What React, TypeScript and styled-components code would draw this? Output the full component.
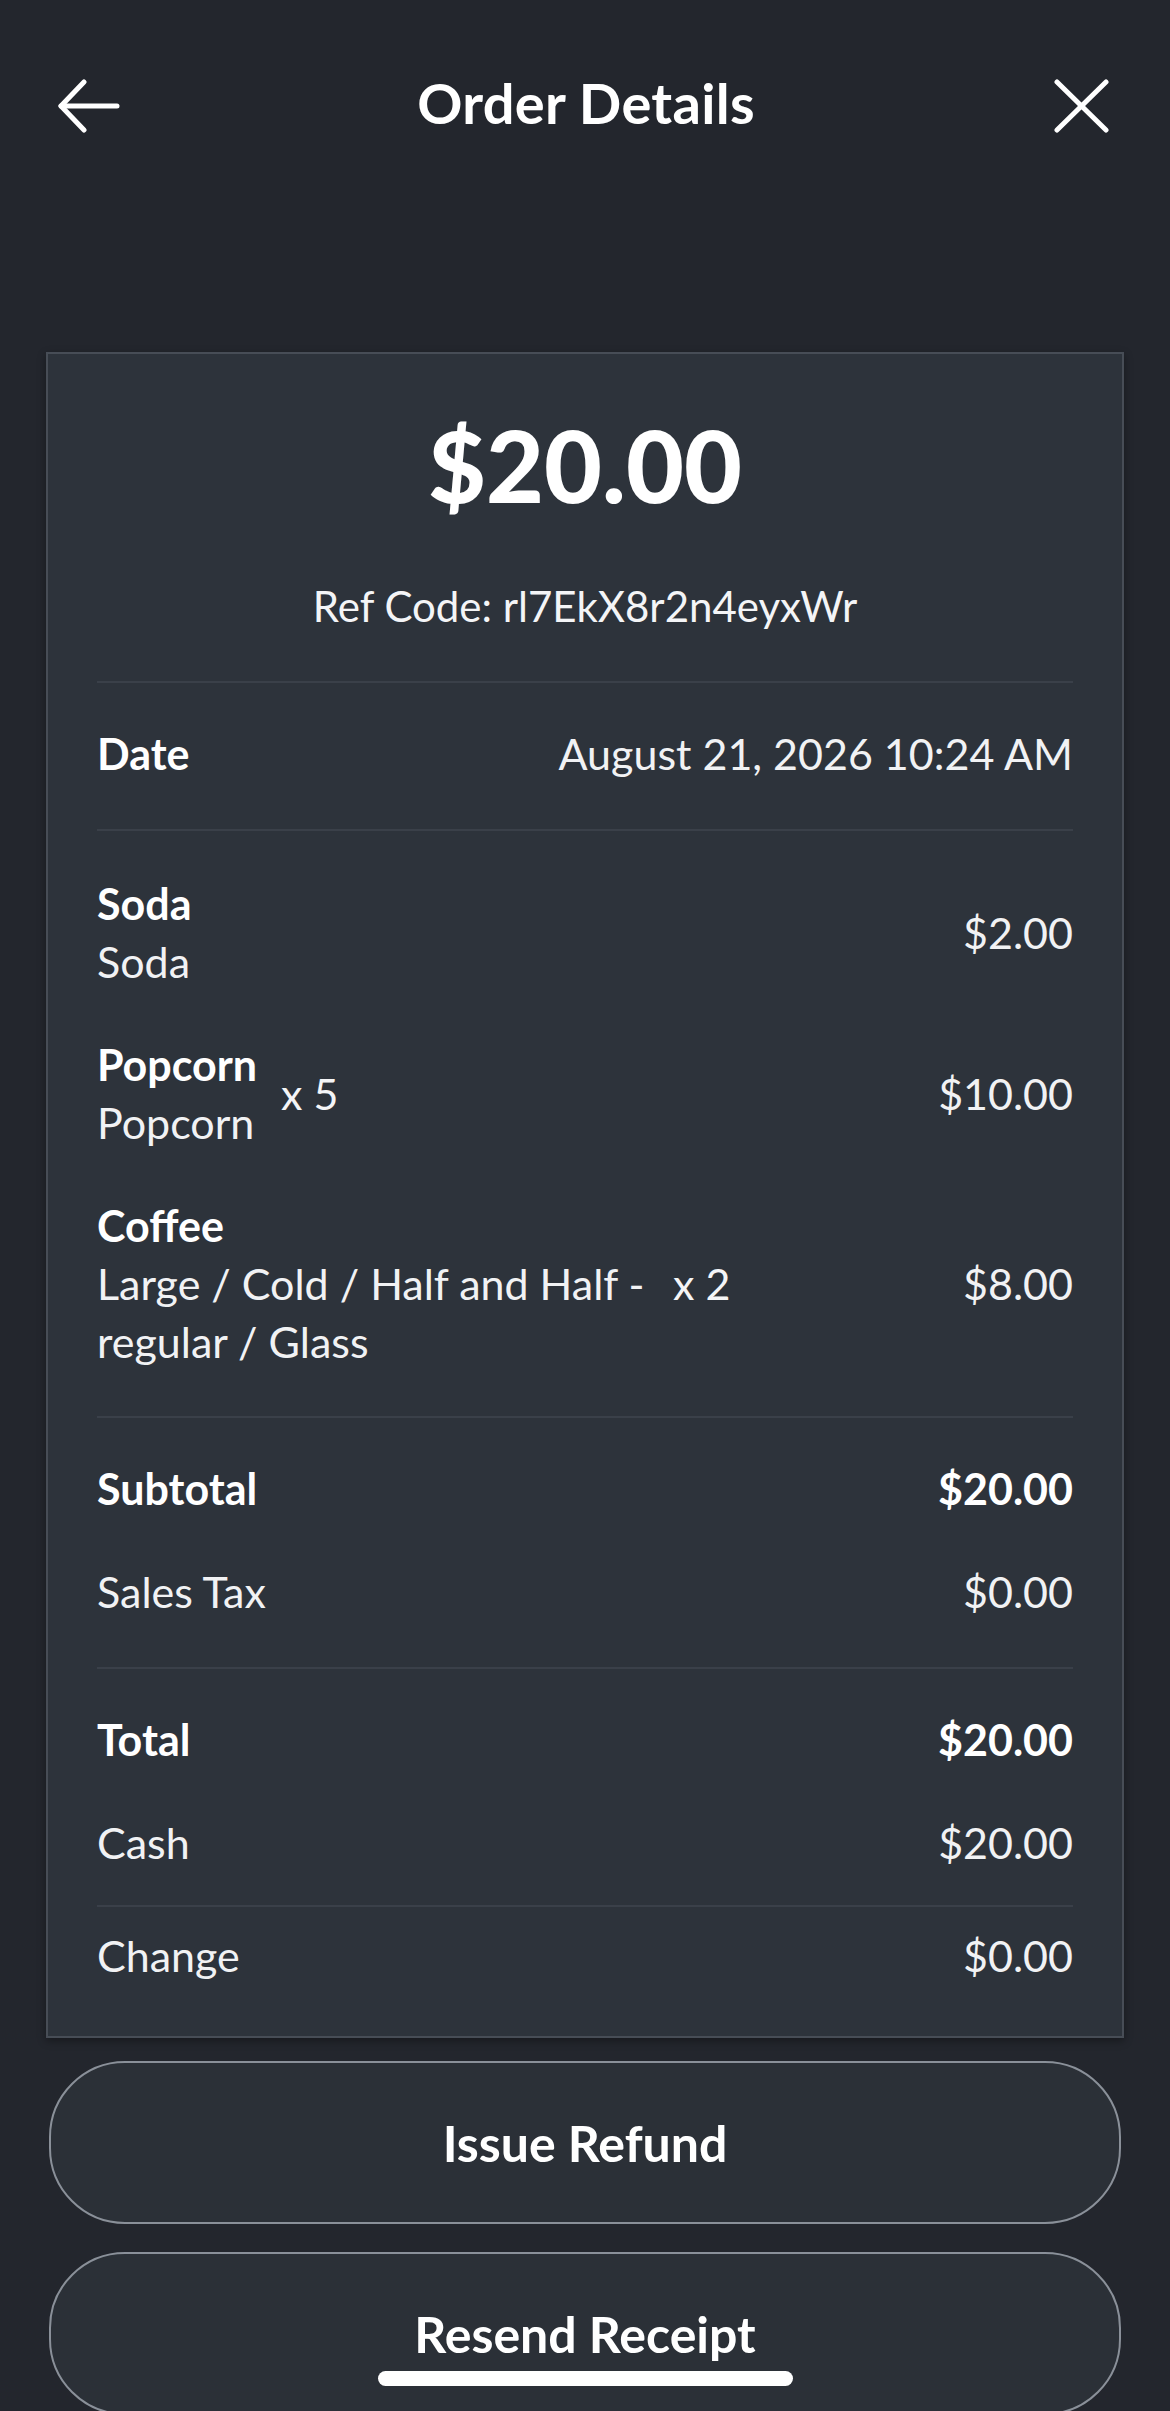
import styled, { createGlobalStyle } from 'styled-components';

const GlobalStyle = createGlobalStyle`
  html, body {
    margin: 0;
    padding: 0;
    background: #23262d;
  }
  body {
    font-family: Lato, 'Noto Sans', sans-serif;
    color: #f4f5f7;
  }
  * {
    box-sizing: border-box;
  }
`;

type LineItem = {
  name: string;
  detail: string;
  qty?: number;
  price: string;
};

const items: LineItem[] = [
  { name: 'Soda', detail: 'Soda', price: '$2.00' },
  { name: 'Popcorn', detail: 'Popcorn', qty: 5, price: '$10.00' },
  { name: 'Coffee', detail: 'Large / Cold / Half and Half - regular / Glass', qty: 2, price: '$8.00' },
];

export default function App() {
  return (
    <Page>
      <GlobalStyle />
      <Header>
        <IconButton aria-label="Back">
          <svg width="62" height="54" viewBox="0 0 62 54" fill="none" stroke="#fff" strokeWidth="5" strokeLinecap="round" strokeLinejoin="round">
            <path d="M3 27H59" />
            <path d="M26 3L3 27L26 51" />
          </svg>
        </IconButton>
        <Title>Order Details</Title>
        <IconButton aria-label="Close" $right>
          <svg width="56" height="54" viewBox="0 0 56 54" fill="none" stroke="#fff" strokeWidth="5" strokeLinecap="round">
            <path d="M3 3L52 51" />
            <path d="M52 3L3 51" />
          </svg>
        </IconButton>
      </Header>

      <Card>
        <Amount>$20.00</Amount>
        <RefCode>Ref Code: rl7EkX8r2n4eyxWr</RefCode>

        <Section $top={42} $bottom={46} $divider>
          <Row>
            <Label $bold>Date</Label>
            <Value>August 21, 2026 10:24 AM</Value>
          </Row>
        </Section>

        <Section $top={44} $bottom={45} $divider>
          {items.map((item) => (
            <ItemRow key={item.name}>
              <ItemText>
                <Label $bold>{item.name}</Label>
                <Label>{item.detail}</Label>
              </ItemText>
              {item.qty ? <Qty>x {item.qty}</Qty> : null}
              <Value>{item.price}</Value>
            </ItemRow>
          ))}
        </Section>

        <Section $top={42} $bottom={46} $divider>
          <Row>
            <Label $bold>Subtotal</Label>
            <Value $bold>$20.00</Value>
          </Row>
          <Row>
            <Label>Sales Tax</Label>
            <Value>$0.00</Value>
          </Row>
        </Section>

        <Section $top={42} $bottom={33} $divider>
          <Row>
            <Label $bold>Total</Label>
            <Value $bold>$20.00</Value>
          </Row>
          <Row>
            <Label>Cash</Label>
            <Value>$20.00</Value>
          </Row>
        </Section>

        <Section $top={20} $bottom={51}>
          <Row>
            <Label>Change</Label>
            <Value>$0.00</Value>
          </Row>
        </Section>
      </Card>

      <Actions>
        <ActionButton>Issue Refund</ActionButton>
        <ActionButton>Resend Receipt</ActionButton>
      </Actions>

      <HomeIndicator />
    </Page>
  );
}

const Page = styled.div`
  position: relative;
  width: 1170px;
  height: 2411px;
  overflow: hidden;
  background: #23262d;
  display: flex;
  flex-direction: column;
`;

const Header = styled.header`
  height: 212px;
  flex-shrink: 0;
  display: grid;
  grid-template-columns: 1fr auto 1fr;
  align-items: center;
  padding: 0 60px 0 58px;
`;

const IconButton = styled.button<{ $right?: boolean }>`
  background: none;
  border: none;
  padding: 0;
  display: flex;
  justify-self: ${(p) => (p.$right ? 'end' : 'start')};
  cursor: pointer;
`;

const Title = styled.h1`
  margin: 0 0 6px 4px;
  font-size: 56px;
  line-height: 64px;
  font-weight: 700;
  color: #fff;
  letter-spacing: 0.3px;
`;

const Card = styled.section`
  margin: 140px 46px 0;
  flex-shrink: 0;
  background: #2d333b;
  border: 2px solid #474d56;
  box-shadow: 0 3px 8px rgba(0, 0, 0, 0.35);
  padding: 52px 49px 0;
`;

const Amount = styled.div`
  text-align: center;
  font-size: 100px;
  line-height: 116px;
  font-weight: 900;
  color: #fff;
`;

const RefCode = styled.div`
  margin-top: 56px;
  padding-bottom: 47px;
  border-bottom: 2px solid #3a4049;
  text-align: center;
  font-size: 42px;
  line-height: 56px;
`;

const Section = styled.div<{ $top: number; $bottom: number; $divider?: boolean }>`
  display: flex;
  flex-direction: column;
  gap: 45px;
  padding: ${(p) => p.$top}px 0 ${(p) => p.$bottom}px;
  border-bottom: ${(p) => (p.$divider ? '2px solid #3a4049' : 'none')};
`;

const Row = styled.div`
  display: flex;
  justify-content: space-between;
  align-items: center;
  font-size: 43px;
  line-height: 58px;
`;

const ItemRow = styled(Row)`
  justify-content: flex-start;
`;

const ItemText = styled.div`
  display: flex;
  flex-direction: column;
  max-width: 552px;
`;

const Label = styled.span<{ $bold?: boolean }>`
  font-weight: ${(p) => (p.$bold ? 700 : 400)};
  color: ${(p) => (p.$bold ? '#fff' : '#f1f2f4')};
`;

const Qty = styled.span`
  margin-left: 24px;
`;

const Value = styled.span<{ $bold?: boolean }>`
  margin-left: auto;
  text-align: right;
  font-weight: ${(p) => (p.$bold ? 700 : 400)};
  color: ${(p) => (p.$bold ? '#fff' : '#f1f2f4')};
`;

const Actions = styled.div`
  display: flex;
  flex-direction: column;
  gap: 28px;
  margin: 23px 49px 0;
`;

const ActionButton = styled.button`
  height: 163px;
  flex-shrink: 0;
  border: 2.5px solid #8a9099;
  border-radius: 76px;
  background: #2b3037;
  color: #fff;
  font-family: Lato, 'Noto Sans', sans-serif;
  font-size: 50px;
  font-weight: 700;
  cursor: pointer;
`;

const HomeIndicator = styled.div`
  position: absolute;
  left: 378px;
  bottom: 25px;
  width: 415px;
  height: 15px;
  border-radius: 8px;
  background: #fff;
`;
